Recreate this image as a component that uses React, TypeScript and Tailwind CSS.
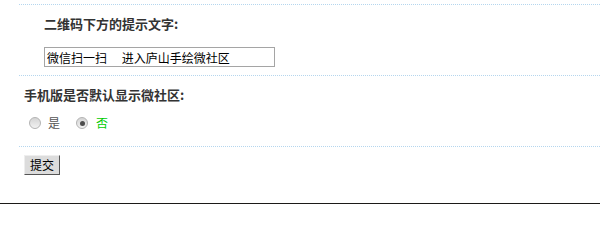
const cjk = { fontFamily: '"Noto Sans CJK SC", "Liberation Sans", sans-serif' };

const Radio = ({ checked }: { checked?: boolean }) => (
  <span className="flex size-[12px] items-center justify-center rounded-full border border-[#b3b3b3] bg-gradient-to-b from-[#d4d4d4] to-[#f2f2f2]">
    {checked && <span className="size-[5px] rounded-full bg-[#4d4d4d]" />}
  </span>
);

export default function App() {
  return (
    <div className="h-[204px] w-[600px] overflow-hidden bg-white" style={cjk}>
      <div className="h-[203px] pl-[19px] pt-[4px]">
        <section className="border-t border-dotted border-[#b5d6ee] pb-[8px] pl-[25px] pt-[9px]">
          <h4 className="text-[13px] font-bold leading-[20px] text-[#333]">
            二维码下方的提示文字:
          </h4>
          <input
            readOnly
            value={"微信扫一扫\u3000 进入庐山手绘微社区"}
            className="mt-[13px] block h-[20px] w-[231px] border border-[#a5a5a5] bg-white px-[2px] text-[12px] leading-[18px] text-black outline-none"
            style={cjk}
          />
        </section>

        <section className="border-t border-dotted border-[#b5d6ee] pb-[13px] pl-[5px] pt-[9px]">
          <h4 className="text-[13px] font-bold leading-[20px] text-[#333]">
            手机版是否默认显示微社区:
          </h4>
          <div className="mt-[8px] flex h-[20px] items-center pl-[5px] text-[12px]">
            <Radio />
            <span className="ml-[7px] text-[#555]">是</span>
            <span className="ml-[16px]">
              <Radio checked />
            </span>
            <span className="ml-[8px] text-[#00cc00]">否</span>
          </div>
        </section>

        <section className="border-t border-dotted border-[#b5d6ee] pl-[5px] pt-[8px]">
          <button
            className="flex h-[20px] w-[36px] items-center justify-center border border-b-[#555] border-l-[#eee] border-r-[#555] border-t-[#eee] bg-[#dcdcdc] text-[12px] text-black"
            style={cjk}
          >
            提交
          </button>
        </section>
      </div>
      <div className="h-[1px] bg-[#1c1a18]" />
    </div>
  );
}
